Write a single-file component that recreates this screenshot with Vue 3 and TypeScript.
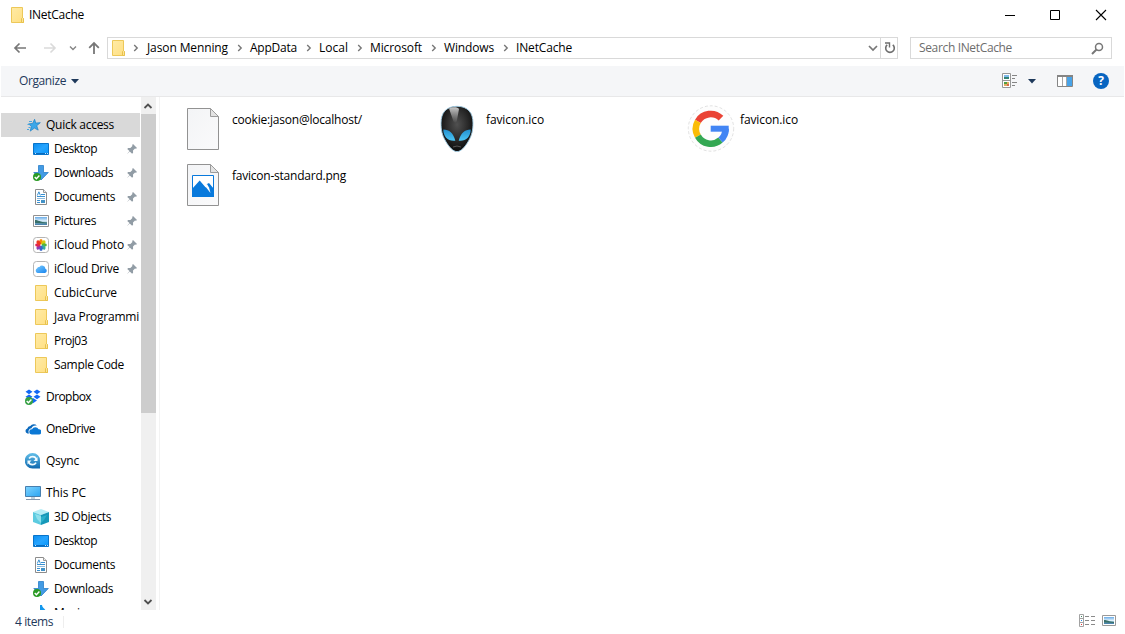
<script setup lang="ts">
interface NavItem {
  label: string
  icon: string
  width: number
  child?: boolean
  pinned?: boolean
  selected?: boolean
  gap?: boolean
}

const crumbs = [
  { label: 'Jason Menning', width: 81 },
  { label: 'AppData', width: 47 },
  { label: 'Local', width: 29 },
  { label: 'Microsoft', width: 52 },
  { label: 'Windows', width: 50 },
  { label: 'INetCache', width: 56 },
]

const nav: NavItem[] = [
  { label: 'Quick access', icon: 'star', width: 68, selected: true },
  { label: 'Desktop', icon: 'desktop', width: 43, child: true, pinned: true },
  { label: 'Downloads', icon: 'download', width: 59, child: true, pinned: true },
  { label: 'Documents', icon: 'document', width: 61, child: true, pinned: true },
  { label: 'Pictures', icon: 'picture', width: 42, child: true, pinned: true },
  { label: 'iCloud Photo', icon: 'photos', width: 70, child: true, pinned: true },
  { label: 'iCloud Drive', icon: 'cloud', width: 65, child: true, pinned: true },
  { label: 'CubicCurve', icon: 'folder', width: 63, child: true },
  { label: 'Java Programmi', icon: 'folder', width: 85, child: true },
  { label: 'Proj03', icon: 'folder', width: 33, child: true },
  { label: 'Sample Code', icon: 'folder', width: 70, child: true },
  { label: 'Dropbox', icon: 'dropbox', width: 45, gap: true },
  { label: 'OneDrive', icon: 'onedrive', width: 49, gap: true },
  { label: 'Qsync', icon: 'qsync', width: 33, gap: true },
  { label: 'This PC', icon: 'pc', width: 40, gap: true },
  { label: '3D Objects', icon: 'cube', width: 57, child: true },
  { label: 'Desktop', icon: 'desktop', width: 43, child: true },
  { label: 'Documents', icon: 'document', width: 61, child: true },
  { label: 'Downloads', icon: 'download', width: 59, child: true },
  { label: 'Music', icon: 'music', width: 31, child: true },
]

const files = [
  { label: 'cookie:jason@localhost/', icon: 'blank', width: 130 },
  { label: 'favicon.ico', icon: 'alien', width: 58 },
  { label: 'favicon.ico', icon: 'google', width: 58 },
  { label: 'favicon-standard.png', icon: 'png', width: 114 },
]

// Tracks a label so that it occupies the given width in pixels.
const vFit = {
  mounted(el: HTMLElement, binding: { value: number }) {
    const natural = el.getBoundingClientRect().width
    const count = (el.textContent ?? '').length
    if (count) el.style.letterSpacing = `${(binding.value - natural) / count}px`
  },
}
</script>

<template>
  <div class="window">
    <svg class="defs" aria-hidden="true">
      <defs>
        <linearGradient id="gFolder" x1="0" y1="0" x2="1" y2="1"><stop offset="0" stop-color="#ffeba6" /><stop offset="1" stop-color="#ffdf82" /></linearGradient>
        <linearGradient id="gDesk" x1="0" y1="0" x2="1" y2="1"><stop offset="0" stop-color="#0a8df0" /><stop offset=".5" stop-color="#27a5ff" /><stop offset="1" stop-color="#0796fa" /></linearGradient>
        <linearGradient id="gPc" x1="0" y1="0" x2="1" y2="1"><stop offset="0" stop-color="#7fd4ff" /><stop offset="1" stop-color="#2aa4f2" /></linearGradient>
        <linearGradient id="gPage" x1="0" y1="0" x2="1" y2="1"><stop offset="0" stop-color="#f3f4f6" /><stop offset="1" stop-color="#fafafb" /></linearGradient>
        <linearGradient id="gCloud" x1="0" y1="0" x2="1" y2="1"><stop offset="0" stop-color="#79cbff" /><stop offset="1" stop-color="#1784ee" /></linearGradient>
        <linearGradient id="gSky" x1="0" y1="0" x2="0" y2="1"><stop offset="0" stop-color="#6aace8" /><stop offset=".5" stop-color="#e2f2fc" /><stop offset=".7" stop-color="#7fb0c6" /><stop offset="1" stop-color="#3c78a8" /></linearGradient>
        <radialGradient id="gHead" cx=".5" cy=".4" r=".62"><stop offset="0" stop-color="#505050" /><stop offset=".55" stop-color="#292929" /><stop offset="1" stop-color="#080808" /></radialGradient>
        <linearGradient id="gShine" x1="0" y1="0" x2="0" y2="1"><stop offset="0" stop-color="#fff" stop-opacity=".75" /><stop offset="1" stop-color="#fff" stop-opacity="0" /></linearGradient>
        <linearGradient id="gEye" x1="0" y1="0" x2="0" y2="1"><stop offset="0" stop-color="#2390cf" /><stop offset="1" stop-color="#4cc6f5" /></linearGradient>
        <linearGradient id="gQ" x1="0" y1="0" x2="0" y2="1"><stop offset="0" stop-color="#62bfe9" /><stop offset="1" stop-color="#1068ae" /></linearGradient>
      </defs>

      <symbol id="folder" viewBox="0 0 16 16">
        <path d="M2.5.5h11v11h1v4h-12z" fill="url(#gFolder)" stroke="#edc859" />
        <path d="M12.5 15.5v-4l1-1 1 1v4z" fill="#fbe49a" stroke="#e9c24c" />
      </symbol>
      <symbol id="star" viewBox="0 0 16 16">
        <path d="M9.600 2.300l1.100 3.800 4.600-.4-3.600 3 1.500 4.400-3.800-2-4.200 3 1.200-4.600-2.700-2.600 4-.5z" fill="#3ba7e9" stroke="#2386ca" stroke-width=".8" />
        <path d="M4 4.500h3M2.500 7.500h2M3.500 10.500h2M2 12.500h2" stroke="#4ba6de" />
      </symbol>
      <symbol id="desktop" viewBox="0 0 16 16">
        <path d="M.5 2.500h15v11H.5z" fill="url(#gDesk)" stroke="#0874ca" />
        <path d="M1 12.500h14" stroke="#086bbd" /><path d="M2 12.500h1M12 12.500h1M14 12.500h1" stroke="#c4e5ff" />
      </symbol>
      <symbol id="download" viewBox="0 0 16 16">
        <path d="M5.500.5h5v7h4.800L8 15 .8 7.500h4.700z" fill="#439be4" stroke="#2a7fca" stroke-width=".8" />
        <circle cx="4" cy="12" r="4" fill="#2a9a24" /><path d="M1.700 12l1.700 1.700 3-3.200" fill="none" stroke="#fff" stroke-width="1.400" />
      </symbol>
      <symbol id="document" viewBox="0 0 16 16">
        <path d="M2.500.5h8l3 3v12h-11z" fill="#fff" stroke="#8c8c8c" /><path d="M10.500.5v3h3" fill="#eee" stroke="#999" />
        <path d="M4.300 6.500l1.600-3.700 1.500 3.700M8 5.500h4M4 7.500h8M4 11.500h3M4 13.500h3" fill="none" stroke="#3a91d2" /><path d="M4 9.500h8" stroke="#8fbbdc" /><path d="M8 11h4v3H8z" fill="#4292c7" />
      </symbol>
      <symbol id="picture" viewBox="0 0 16 16">
        <path d="M.5 2.500h15v11H.5z" fill="#fff" stroke="#919191" /><path d="M2 4h12v8H2z" fill="url(#gSky)" /><path d="M2 7c3 0 5 2 12 2.600v1L2 10z" fill="#39706a" />
      </symbol>
      <symbol id="photos" viewBox="0 0 16 16">
        <rect x=".5" y=".5" width="15" height="15" rx="3" fill="#fff" stroke="#b5b5b5" />
        <g><ellipse cx="8" cy="4.700" rx="1.800" ry="2.600" fill="#f98b06" /><ellipse cx="8" cy="4.700" rx="1.800" ry="2.600" fill="#d6c90c" transform="rotate(45 8 8)" /><ellipse cx="8" cy="4.700" rx="1.800" ry="2.600" fill="#57b537" transform="rotate(90 8 8)" /><ellipse cx="8" cy="4.700" rx="1.800" ry="2.600" fill="#36aaa0" transform="rotate(135 8 8)" /><ellipse cx="8" cy="4.700" rx="1.800" ry="2.600" fill="#3568cb" transform="rotate(180 8 8)" /><ellipse cx="8" cy="4.700" rx="1.800" ry="2.600" fill="#8d3bb1" transform="rotate(225 8 8)" /><ellipse cx="8" cy="4.700" rx="1.800" ry="2.600" fill="#df2555" transform="rotate(270 8 8)" /><ellipse cx="8" cy="4.700" rx="1.800" ry="2.600" fill="#ee3a1f" transform="rotate(315 8 8)" /></g>
      </symbol>
      <symbol id="cloud" viewBox="0 0 16 16">
        <rect x=".5" y=".5" width="15" height="15" rx="3" fill="#fff" stroke="#b5b5b5" />
        <path d="M4.500 12a2.500 2.500 0 0 1-.3-4.700A2 2 0 0 1 6.400 6a3.300 3.300 0 0 1 6 1.800A2.200 2.200 0 0 1 12 12z" fill="url(#gCloud)" />
      </symbol>
      <symbol id="dropbox" viewBox="0 0 16 16">
        <path d="M4 .5l3.500 2.300L4 5.200.5 2.800zM12 .5l3.500 2.300L12 5.200 8.500 2.800zM4 5.500l3.500 2.300L4 10.200.5 7.800zM12 5.500l3.500 2.300-3.500 2.400-3.500-2.400zM8 9l4 2.600L8 14.200 4 11.600z" fill="#1268f5" />
        <circle cx="4" cy="12" r="4" fill="#36a044" /><path d="M1.700 12l1.700 1.700 3-3.200" fill="none" stroke="#fff" stroke-width="1.400" />
      </symbol>
      <symbol id="onedrive" viewBox="0 0 16 16">
        <path d="M4 12.500H2.400A2.600 2.600 0 0 1 2.300 7.500 3.300 3.300 0 0 1 5.300 5 4.500 4.500 0 0 1 12 4.700C8.300 4 7 6 6.600 7.300 3.800 7.500 2.900 10.300 4 12.500z" fill="#0b69bd" />
        <path d="M6.700 13.500A2.600 2.600 0 0 1 7 8.300a3.600 3.600 0 0 1 6.600 0A2.600 2.600 0 0 1 14 13.500z" fill="#0b78d5" />
      </symbol>
      <symbol id="qsync" viewBox="0 0 16 16">
        <path d="M7.500 0a7.500 7.500 0 1 0 0 15.500H15V8A7.500 7.500 0 0 0 7.500 0z" fill="url(#gQ)" />
        <circle cx="7.500" cy="7.700" r="4" fill="none" stroke="#f2fbff" stroke-width="1.700" stroke-dasharray="9.500 3" stroke-dashoffset="-2" /><path d="M12.500 4v4h-4zM2.500 11.500v-4h4z" fill="#f2fbff" />
      </symbol>
      <symbol id="pc" viewBox="0 0 16 16">
        <path d="M.5 1.500h15v10H.5z" fill="url(#gPc)" stroke="#477fae" /><path d="M6 12h4v2H6z" fill="#bed0dd" /><path d="M1 14.500h14" stroke="#8498ae" />
      </symbol>
      <symbol id="cube" viewBox="0 0 16 16">
        <path d="M0 3l8-3 8 3-8 3z" fill="#b5edf6" /><path d="M0 3l8 3v10l-8-3z" fill="#5ccbe0" /><path d="M16 3L8 6v10l8-3z" fill="#1698b8" /><path d="M2 5l6 2v7l-4-4z" fill="#8fe0ec" /><path d="M8 8l6-2-3 5-3 3z" fill="#2bb0cb" />
      </symbol>
      <symbol id="music" viewBox="0 0 16 16"><path d="M7 0h2c0 3 4 4 4 7-1-2-3-2-4-2v7a3 3 0 1 1-2-3z" fill="#1398ed" /></symbol>
      <symbol id="pin" viewBox="0 0 12 12"><path d="M7 1l4 4-1 .8-1-.2-2 2 .1 2.200-1 1L3.800 8.500.8 11.200 3.500 8 1.200 5.900l1-1 2.200.1 2-2L6.200 2z" fill="#919ca5" /></symbol>

      <symbol id="blank" viewBox="0 0 48 48">
        <path d="M8.500 3.500h23l8 8v33h-31z" fill="url(#gPage)" stroke="#929292" /><path d="M31.500 3.500v8h8z" fill="#e3e3e3" stroke="#9c9c9c" />
      </symbol>
      <symbol id="png" viewBox="0 0 48 48">
        <path d="M8.500 3.500h23l8 8v33h-31z" fill="url(#gPage)" stroke="#929292" /><path d="M31.500 3.500v8h8z" fill="#e3e3e3" stroke="#9c9c9c" />
        <path d="M13.500 14.500h21v21h-21z" fill="#fff" stroke="#0879dc" /><path d="M13 28l7.700-8.500 6 7L28 23l2-1 5 6v8H13z" fill="#0879dc" /><path d="M26 25l5.500 7-1.500-5.500-2-3.500z" fill="#fff" />
      </symbol>
      <symbol id="alien" viewBox="0 0 48 48">
        <path d="M24 1.300C13 1.300 8 8 8 18c0 7 1 12 4.500 18 3.500 6 7.500 10.600 11.500 10.600S32 42 35.500 36C39 30 40 25 40 18 40 8 35 1.300 24 1.300z" fill="url(#gHead)" stroke="#a3cfe8" stroke-width=".9" />
        <path d="M16 3.500c4-2 9-1.500 10 .5l-2 11c-1 4-3 4-4 0z" fill="url(#gShine)" />
        <path d="M10.300 24.500c6 0 10 3.500 12 11.200-7 1-12-4-12-11.200zM37.700 24.500c-6 0-10 3.500-12 11.200 7 1 12-4 12-11.200z" fill="url(#gEye)" />
        <path d="M20 42q4-2 8 0" fill="none" stroke="#555" />
      </symbol>
      <symbol id="google" viewBox="0 0 48 48">
        <circle cx="24" cy="23.500" r="22.700" fill="#fdfdfd" stroke="#d9d9d9" stroke-width=".8" stroke-dasharray="3 2" />
        <g fill="none" stroke-width="6.600"><path d="M34 13.200A14.800 14.800 0 0 0 10.900 16.300" stroke="#ea4335" /><path d="M10.900 16.300a14.800 14.800 0 0 0 0 14.800" stroke="#fbbc05" /><path d="M10.900 31.100A14.800 14.800 0 0 0 33.500 35.100" stroke="#34a853" /><path d="M33.500 35.100A14.800 14.800 0 0 0 38.600 23.700" stroke="#4285f4" /></g>
        <path d="M23.700 20.700h18v6h-18z" fill="#4285f4" />
      </symbol>
    </svg>

    <header class="titlebar">
      <svg class="i16"><use href="#folder" /></svg>
      <span v-fit="55" class="title">INetCache</span>
      <div class="controls">
        <svg width="12" height="12"><path d="M1 6.500h10" stroke="#000" /></svg>
        <svg width="12" height="12"><path d="M1.500 1.500h9v9h-9z" fill="none" stroke="#000" /></svg>
        <svg width="12" height="12"><path d="M1 1l10 10M11 1L1 11" stroke="#000" stroke-width="1.100" /></svg>
      </div>
    </header>

    <div class="address-row">
      <div class="history">
        <svg class="back" width="14" height="12"><path d="M13 6H2M6.500 1.500L2 6l4.500 4.500" fill="none" stroke="#777" stroke-width="1.700" /></svg>
        <svg class="forward" width="14" height="12"><path d="M1 6h11M7.500 1.500L12 6l-4.500 4.500" fill="none" stroke="#dadada" stroke-width="1.600" /></svg>
        <svg class="recent" width="8" height="6"><path d="M1 1.500l3 3 3-3" fill="none" stroke="#858585" stroke-width="1.400" /></svg>
        <svg class="up" width="12" height="14"><path d="M6 13V2M1.200 6.800L6 2l4.800 4.800" fill="none" stroke="#777" stroke-width="1.800" /></svg>
      </div>
      <div class="address">
        <svg class="i16"><use href="#folder" /></svg>
        <template v-for="crumb in crumbs" :key="crumb.label">
          <svg class="chev" width="6" height="8"><path d="M1.200 1l3 3-3 3" fill="none" stroke="#777" stroke-width="1.400" /></svg>
          <span v-fit="crumb.width">{{ crumb.label }}</span>
        </template>
        <svg class="drop" width="10" height="8"><path d="M1 2l4 4 4-4" fill="none" stroke="#777" stroke-width="1.700" /></svg>
        <div class="refresh">
          <svg width="12" height="12"><path d="M3.200 2.800A4.300 4.300 0 1 0 8.800 2.800" fill="none" stroke="#6e6e6e" stroke-width="1.600" /><path d="M1 1h4.500v4.500" fill="none" stroke="#6e6e6e" stroke-width="1.400" /></svg>
        </div>
      </div>
      <div class="search">
        <span v-fit="93">Search INetCache</span>
        <svg width="13" height="13"><circle cx="8" cy="5" r="3.500" fill="none" stroke="#777" stroke-width="1.500" /><path d="M5.500 7.500L1 12" stroke="#777" stroke-width="2" /></svg>
      </div>
    </div>

    <div class="toolbar">
      <span v-fit="47">Organize</span>
      <svg class="caret" width="8" height="5"><path d="M0 0h8L4 4.500z" fill="#1e395b" /></svg>
      <div class="tools">
        <svg width="16" height="16"><path d="M.5.500h8v14h-8zM.5 7.500h8" fill="#fff" stroke="#979797" /><path d="M2 2h5v4H2z" fill="#7eb9eb" /><path d="M2 4h5v2H2z" fill="#348375" /><path d="M2 9h5v4H2z" fill="#e2ad5f" /><path d="M2 9h3v2H2z" fill="#519d42" /><path d="M5 11h2v2H5z" fill="#d56a4f" /><path d="M10 2.500h5M10 5.500h3M10 9.500h5M10 12.500h3" stroke="#858585" /></svg>
        <svg class="view-caret" width="8" height="5"><path d="M0 0h8L4 4.500z" fill="#1e395b" /></svg>
        <svg class="pane" width="16" height="12"><path d="M.5.500h15v11H.5z" fill="#fff" stroke="#858585" /><path d="M0 1h16" stroke="#858585" stroke-width="2" /><path d="M10 2h5v9h-5z" fill="#48a3e8" /><path d="M5.500 2v9M9.500 2v9" stroke="#a6a6a6" /></svg>
        <span class="help">?</span>
      </div>
    </div>

    <main class="body">
      <nav class="tree">
        <div v-for="(item, index) in nav" :key="index" class="row" :class="{ child: item.child, selected: item.selected, gap: item.gap }">
          <svg class="i16"><use :href="'#' + item.icon" /></svg>
          <span v-fit="item.width">{{ item.label }}</span>
          <svg v-if="item.pinned" class="pin"><use href="#pin" /></svg>
        </div>
      </nav>
      <div class="scrollbar">
        <svg width="10" height="8"><path d="M1.500 6L5 2.500 8.500 6" fill="none" stroke="#505050" stroke-width="1.800" /></svg>
        <div class="track"><div class="thumb"></div></div>
        <svg width="10" height="8"><path d="M1.500 2L5 5.500 8.500 2" fill="none" stroke="#505050" stroke-width="1.800" /></svg>
      </div>
      <section class="files">
        <div v-for="(file, index) in files" :key="index" class="file">
          <svg class="i48"><use :href="'#' + file.icon" /></svg>
          <span v-fit="file.width">{{ file.label }}</span>
        </div>
      </section>
    </main>

    <footer class="status">
      <span v-fit="38">4 items</span>
      <i class="sep"></i>
      <div class="modes">
        <svg width="17" height="13"><path d="M.5.500h4v12h-4zM.5 4.500h4M.5 8.500h4" fill="#fff" stroke="#a2a2a2" /><path d="M2 2.500h1" stroke="#34855d" /><path d="M2 6.500h1" stroke="#2689eb" /><path d="M2 10.500h1" stroke="#e33" /><path d="M6 2.500h4M12 2.500h4M6 6.500h4M12 6.500h4M6 10.500h4M12 10.500h4" stroke="#8a8a8a" /></svg>
        <svg width="14" height="11"><path d="M.5.500h13v10H.5z" fill="#fff" stroke="#999" /><path d="M2 2h10v7H2z" fill="url(#gSky)" /><path d="M2 5c3 0 5 1.500 10 2v1L2 7.500z" fill="#39706a" /></svg>
      </div>
    </footer>
  </div>
</template>

<style>
body {
  background: #fff;
  overflow: hidden;
}
</style>

<style scoped>
.window {
  width: 1125px;
  height: 634px;
  display: flex;
  flex-direction: column;
  background: #fff;
  color: #000;
  font: 12px/16px 'Open Sans', 'Noto Sans', sans-serif;
  white-space: nowrap;
  overflow: hidden;
}
.window svg { display: block; flex: none; }
.window svg.defs { position: absolute; width: 0; height: 0; }
.i16 { width: 16px; height: 16px; }
.titlebar { height: 30px; display: flex; align-items: center; padding-left: 9px; box-sizing: border-box; flex: none; }
.title { margin-left: 4px; }
.controls { display: flex; gap: 34px; margin-left: auto; padding-right: 18px; }
.controls svg:first-child { margin-right: -1px; }
.address-row { height: 36px; display: flex; align-items: center; flex: none; box-sizing: border-box; }
.history { width: 107px; display: flex; align-items: center; }
.back { margin-left: 13px; }
.forward { margin-left: 16px; }
.recent { margin-left: 12px; }
.up { margin-left: 11px; }
.address { width: 791px; height: 22px; border: 1px solid #d9d9d9; display: flex; align-items: center; box-sizing: border-box; padding-left: 2px; }
.address .chev { margin: 0 7px 0 9px; }
.address .i16 + .chev { margin-left: 7px; margin-right: 8px; }
.drop { margin-left: auto; }
.refresh { width: 17px; height: 20px; margin-left: 2px; padding-left: 2px; border-left: 1px solid #d9d9d9; display: flex; align-items: center; justify-content: center; box-sizing: border-box; }
.search { width: 202px; height: 22px; margin-left: 12px; border: 1px solid #d9d9d9; box-sizing: border-box; display: flex; align-items: center; justify-content: space-between; padding: 0 7px 0 8px; color: #6d6d6d; }
.toolbar { height: 31px; margin: 0 1px; background: #f5f6f8; border-bottom: 1px solid #e8e8e9; box-sizing: border-box; display: flex; align-items: center; padding-left: 18px; color: #1e395b; flex: none; }
.caret { margin-left: 5px; }
.tools { display: flex; align-items: center; margin-left: auto; padding-right: 15px; }
.view-caret { margin-left: 10px; }
.pane { margin-left: 21px; }
.help { width: 16px; height: 16px; margin-left: 20px; border-radius: 50%; background: #0865c1; color: #fff; font-weight: 700; font-size: 12px; text-align: center; line-height: 16px; }
.body { height: 513px; display: flex; flex: none; }
.tree { width: 141px; box-sizing: border-box; padding: 16px 1px 0; overflow: hidden; }
.row { height: 24px; display: flex; align-items: center; padding-left: 24px; position: relative; }
.row.child { padding-left: 32px; }
.row.gap { margin-top: 8px; }
.row.selected { background: #d9d9d9; }
.row span { margin-left: 5px; }
.pin { position: absolute; right: 2px; top: 6px; width: 12px; height: 12px; }
.scrollbar { width: 15px; background: #f0f0f0; display: flex; flex-direction: column; align-items: center; padding: 5px 0 4px; box-sizing: border-box; }
.scrollbar > svg { margin-right: 1px; }
.track { flex: 1; width: 100%; padding-top: 4px; }
.thumb { height: 299px; background: #cdcdcd; }
.files { flex: 1; margin-left: 3px; border-left: 1px solid #f3f3f3; padding: 8px 0 0 19px; display: grid; grid-template-columns: repeat(3, 254px); grid-auto-rows: 56px; align-content: start; }
.file { display: flex; align-items: flex-start; }
.i48 { width: 48px; height: 48px; }
.file span { margin: 7px 0 0 5px; }
.status { height: 24px; display: flex; align-items: center; padding: 0 9px 0 15px; color: #1e395b; flex: none; }
.sep { width: 1px; height: 12px; background: #eee; margin-left: 10px; }
.modes { margin-left: auto; display: flex; align-items: center; gap: 6px; padding-bottom: 3px; }
</style>
